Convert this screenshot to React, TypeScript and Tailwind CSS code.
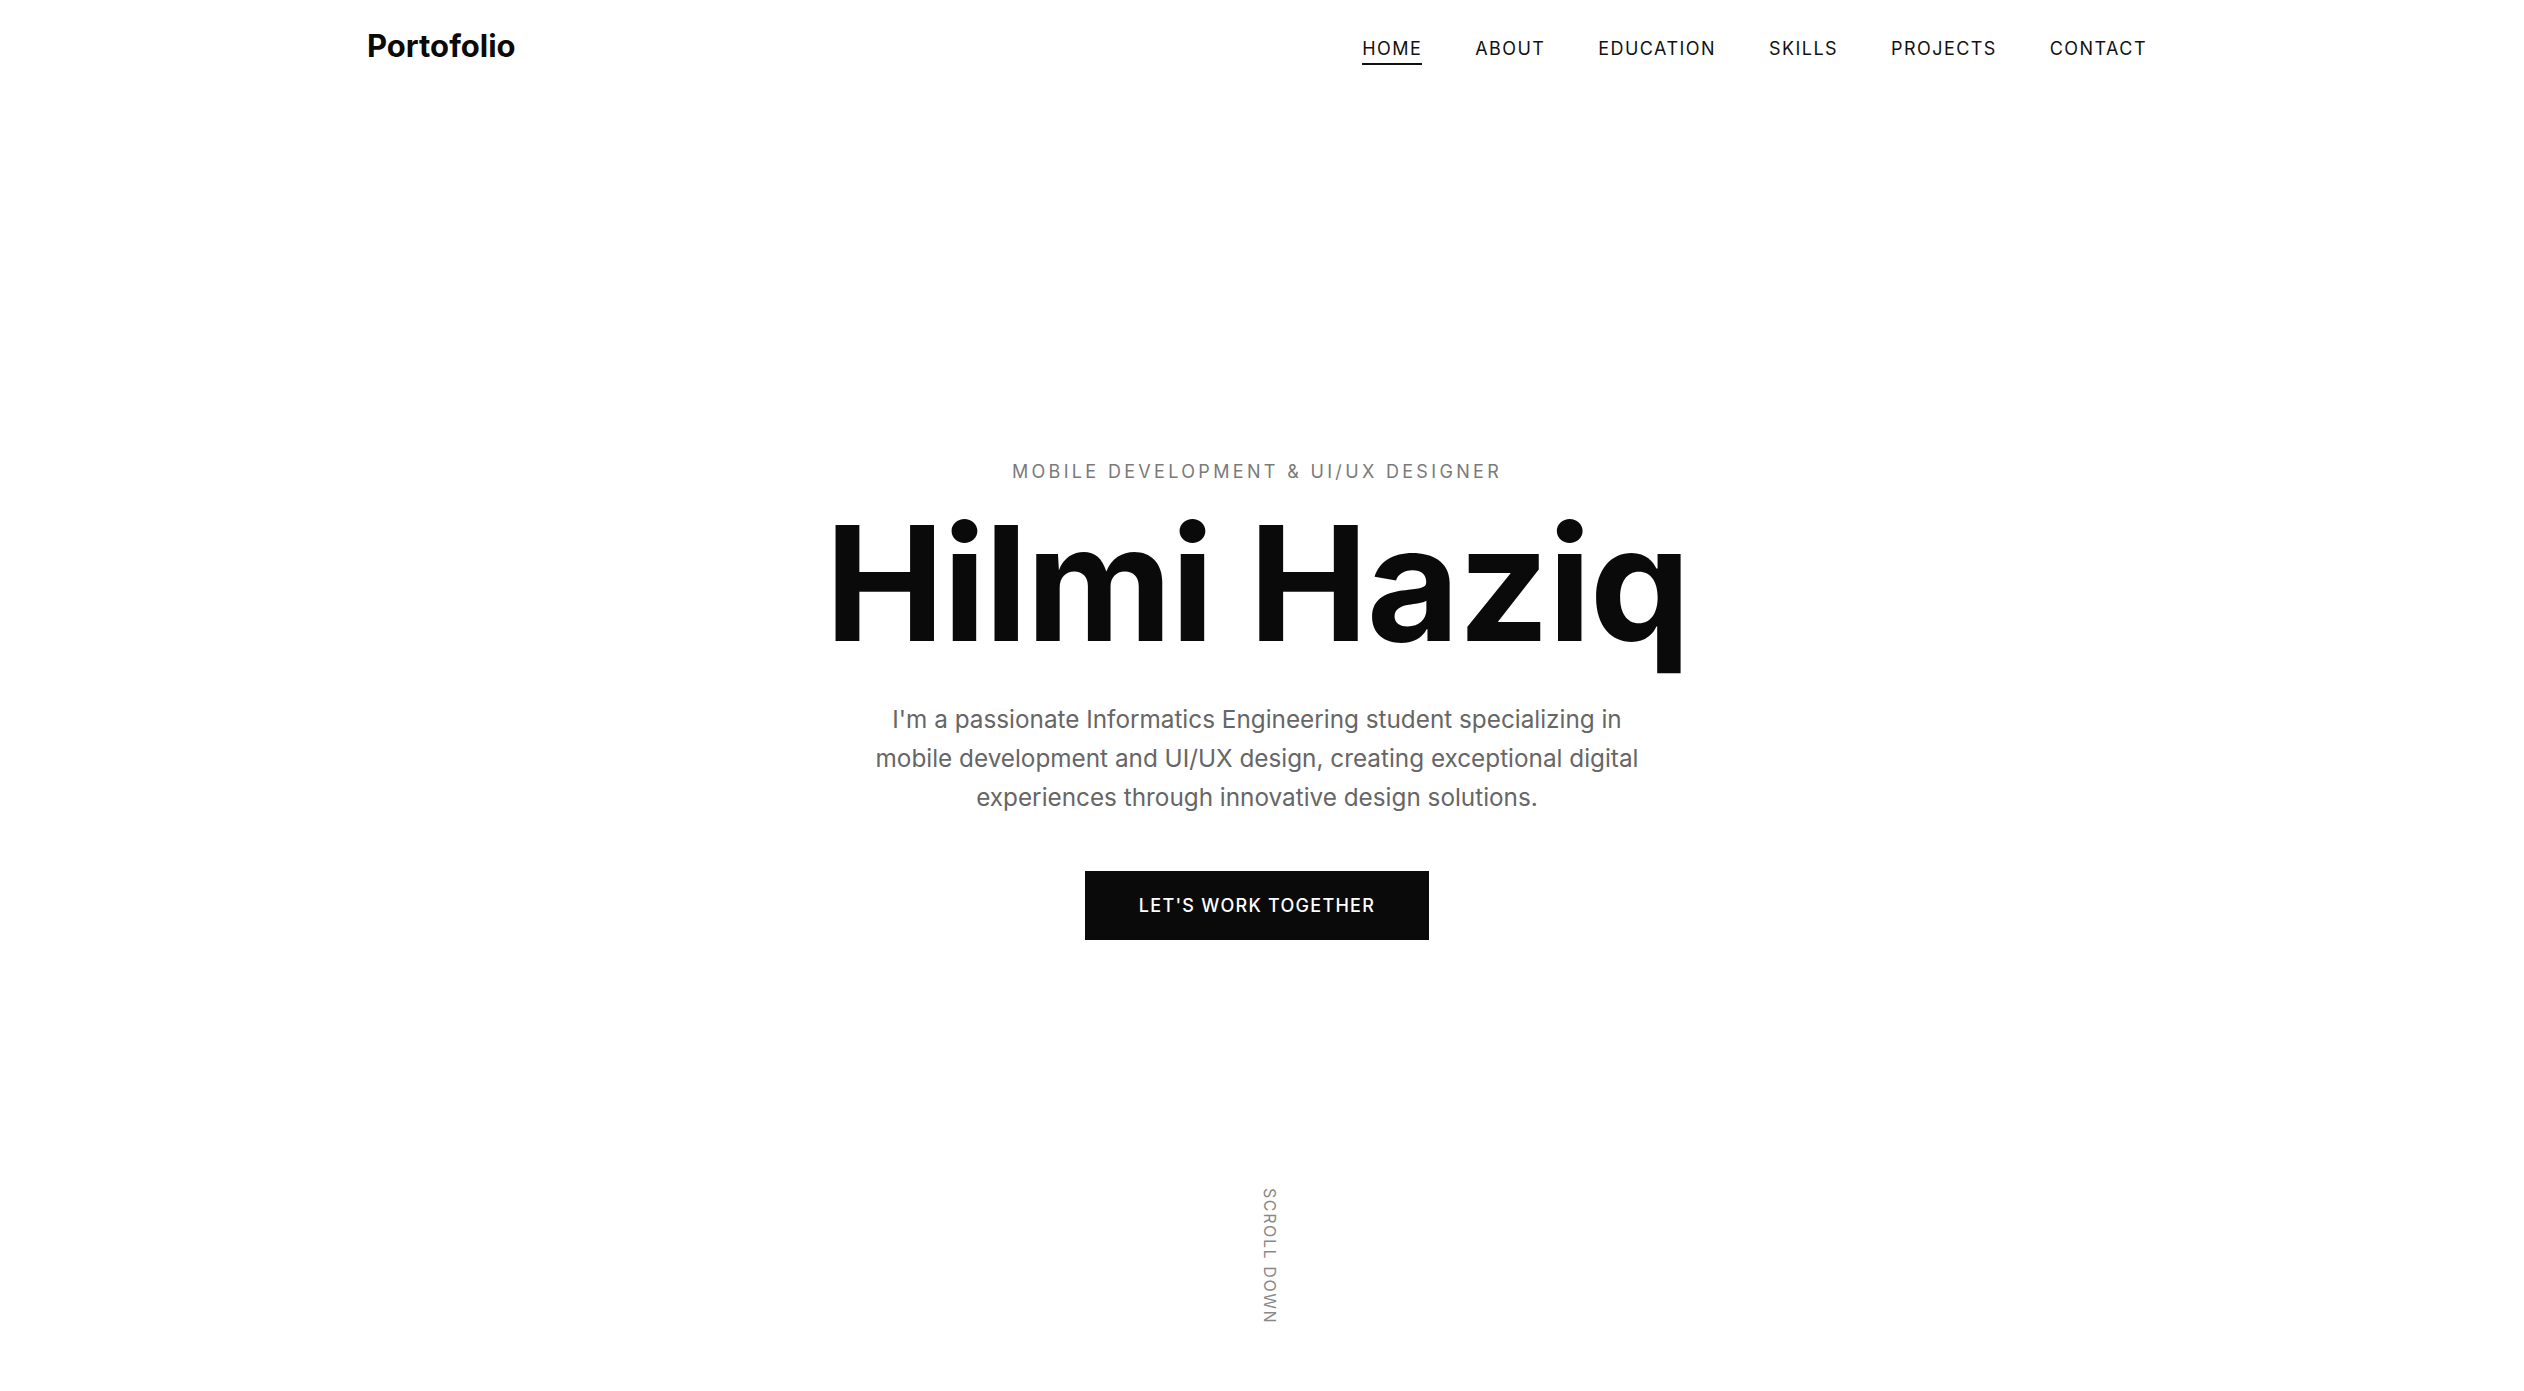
import React from 'react';

const navItems = ['HOME', 'ABOUT', 'EDUCATION', 'SKILLS', 'PROJECTS', 'CONTACT'];

const Header = () => {
  return (
    <header className="absolute top-0 left-0 right-2.5 z-10">
      <div className="mx-auto flex w-[1780px] items-start justify-between pt-[28px]">
        <a href="#home" className="text-[31px] font-bold leading-9 text-[#0a0a0a]">
          Portofolio
        </a>
        <nav className="mt-[7px] flex items-center gap-[53px]">
          {navItems.map((item, i) => (
            <a
              key={item}
              href={'#' + item.toLowerCase()}
              className={
                i === 0
                  ? 'border-b-2 border-[#111] text-[18px] font-normal leading-7 tracking-[0.08em] text-[#111]'
                  : 'border-b-2 border-transparent text-[18px] font-normal leading-7 tracking-[0.08em] text-[#111]'
              }
            >
              {item}
            </a>
          ))}
        </nav>
      </div>
    </header>
  );
};

const Hero = () => {
  return (
    <section id="home" className="relative flex min-h-screen flex-col items-center justify-center px-4 pt-[6px] text-center">
      <p className="mb-[17px] text-[18px] leading-7 tracking-[0.185em] text-[#7a7a7a]">
        MOBILE DEVELOPMENT &amp; UI/UX DESIGNER
      </p>
      <h1 className="text-[160px] font-bold leading-none tracking-[-0.01em] text-[#0a0a0a]">
        Hilmi Haziq
      </h1>
      <p className="mt-[37px] max-w-3xl text-[24.3px] leading-[39px] text-[#666]">
        I'm a passionate Informatics Engineering student specializing in mobile development and UI/UX
        design, creating exceptional digital experiences through innovative design solutions.
      </p>
      <button className="mt-[54px] h-[69px] bg-[#0a0a0a] px-[54px] text-[18px] font-medium tracking-[0.07em] text-white">
        LET'S WORK TOGETHER
      </button>

      {/* scroll hint */}
      <div className="absolute top-[1188px] left-[calc(50%+5px)] flex flex-col items-center">
        <span className="text-[16px] leading-4 tracking-[0.1em] text-[#888] [writing-mode:vertical-rl]">
          SCROLL DOWN
        </span>
      </div>
    </section>
  );
};

export default function App() {
  return (
    <div className="relative min-h-screen overflow-hidden bg-white pr-2.5 font-['Inter','Liberation_Sans',sans-serif]">
      <Header />
      <Hero />
    </div>
  );
}
